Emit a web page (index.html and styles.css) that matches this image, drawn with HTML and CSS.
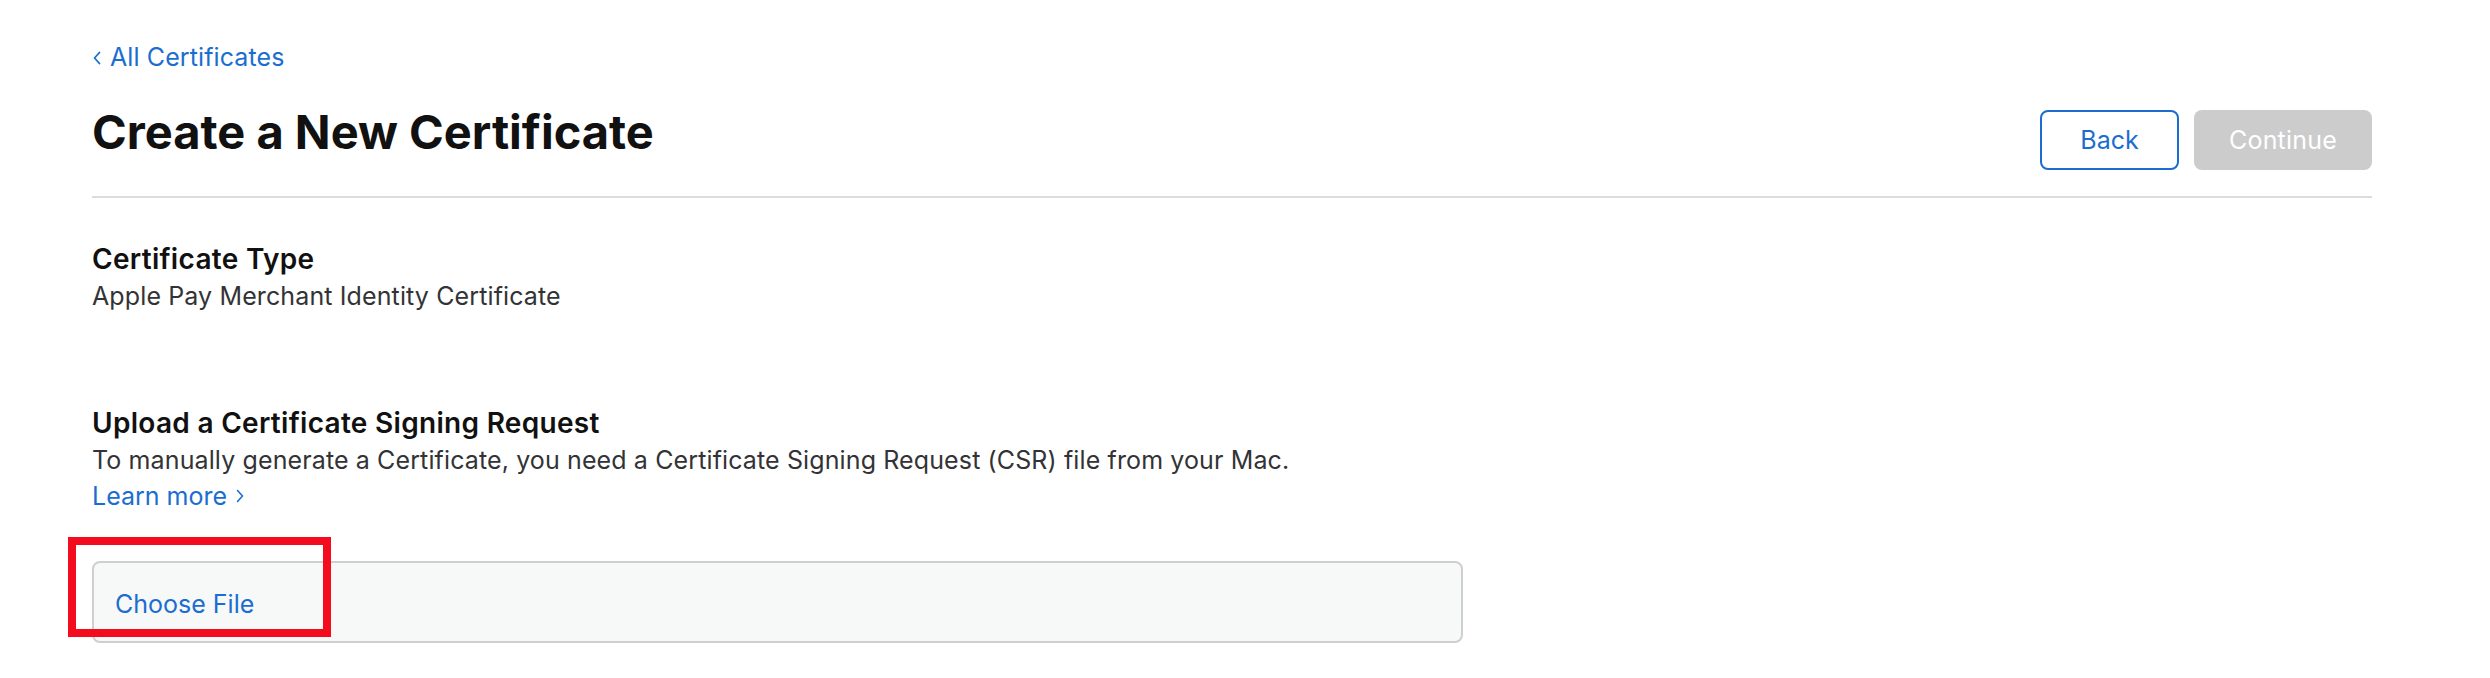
FILE: index.html
```html
<!DOCTYPE html>
<html lang="en">
<head>
<meta charset="utf-8">
<title>Create a New Certificate</title>
<link rel="stylesheet" href="styles.css">
</head>
<body>
<main class="page">
  <a class="back-link" href="#">
    <svg class="chev" width="8" height="14" viewBox="0 0 8 14"><polyline points="6.5,1.5 1.5,7 6.5,12.5" fill="none" stroke="currentColor" stroke-width="1.8" stroke-linecap="round" stroke-linejoin="round"/></svg>
    <span>All Certificates</span>
  </a>
  <header class="header">
    <h1 class="title">Create a New Certificate</h1>
    <div class="actions">
      <button class="btn btn-back" type="button">Back</button>
      <button class="btn btn-continue" type="button" disabled>Continue</button>
    </div>
  </header>

  <section class="section section-type">
    <h2 class="section-title">Certificate Type</h2>
    <p class="section-text">Apple Pay Merchant Identity Certificate</p>
  </section>

  <section class="section section-upload">
    <h2 class="section-title">Upload a Certificate Signing Request</h2>
    <p class="section-text">To manually generate a Certificate, you need a Certificate Signing Request (CSR) file from your Mac.</p>
    <a class="learn-more" href="#">Learn more
      <svg class="chev-r" width="8" height="14" viewBox="0 0 8 14"><polyline points="1.5,1.5 6.5,7 1.5,12.5" fill="none" stroke="currentColor" stroke-width="1.6" stroke-linecap="round" stroke-linejoin="round"/></svg>
    </a>
    <div class="upload-box">
      <span class="choose-file">Choose File</span>
      <div class="highlight"></div>
    </div>
  </section>
</main>
</body>
</html>
```
FILE: styles.css
```css
* { box-sizing: border-box; }
html, body { margin: 0; padding: 0; background: #fff; }
body {
  font-family: "Inter", "Liberation Sans", sans-serif;
  color: #1d1d1f;
  -webkit-font-smoothing: antialiased;
}
.page {
  width: 2280px;
  margin-left: 92px;
  padding-top: 42px;
}
.back-link {
  display: inline-flex;
  align-items: center;
  gap: 9px;
  color: #1b6ecf;
  text-decoration: none;
  font-size: 25px;
  line-height: 30px;
  letter-spacing: 0.1px;
}
.chev { margin-left: 1px; margin-top: 1px; }
.header {
  display: flex;
  justify-content: space-between;
  align-items: flex-start;
  margin-top: 34px;
  padding-bottom: 26px;
  border-bottom: 2px solid #dcdcdc;
}
.title {
  margin: 0;
  font-size: 47px;
  line-height: 52px;
  font-weight: 700;
  color: #111;
}
.actions {
  display: flex;
  gap: 15px;
  margin-top: 4px;
}
.btn {
  height: 60px;
  border-radius: 8px;
  font-family: inherit;
  font-size: 25px;
  padding: 0;
  cursor: pointer;
}
.btn-back {
  width: 139px;
  background: #fff;
  border: 2px solid #1b6ecf;
  color: #1b6ecf;
}
.btn-continue {
  width: 178px;
  background: #cccccc;
  border: none;
  color: #fff;
  letter-spacing: 0.2px;
}
.section { display: flex; flex-direction: column; align-items: flex-start; }
.section-type { margin-top: 42px; }
.section-upload { margin-top: 90px; }
.section-title {
  margin: 0;
  font-size: 28px;
  line-height: 38px;
  font-weight: 600;
  color: #111;
  letter-spacing: 0.3px;
}
.section-text {
  margin: 0;
  font-size: 25px;
  line-height: 36px;
  color: #333336;
  letter-spacing: 0.12px;
}
.learn-more {
  display: inline-flex;
  align-items: center;
  gap: 9px;
  color: #1b6ecf;
  text-decoration: none;
  font-size: 25px;
  line-height: 36px;
}
.upload-box {
  position: relative;
  margin-top: 47px;
  width: 1371px;
  height: 82px;
  border: 2px solid #cfcfcf;
  border-radius: 8px;
  background: #f7f8f8;
  padding: 26px 0 0 21px;
}
.choose-file {
  display: block;
  color: #1b6ecf;
  font-size: 25px;
  line-height: 30px;
}
.highlight {
  position: absolute;
  left: -26px;
  top: -26px;
  width: 263px;
  height: 100px;
  border: 8px solid #f30c1e;
}
```
